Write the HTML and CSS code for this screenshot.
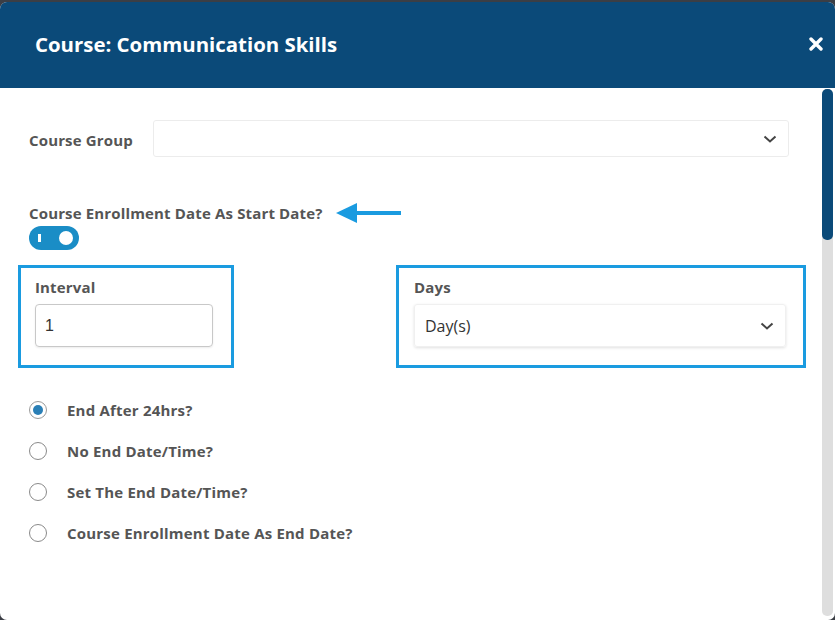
FILE: index.html
```html
<!DOCTYPE html>
<html lang="en">
<head>
    <meta charset="UTF-8">
    <meta name="viewport" content="width=device-width, initial-scale=1.0">
    <title>Course: Communication Skills</title>
    <link rel="stylesheet" href="styles.css">
</head>
<body>
    <div class="modal">
        <div class="modal-header">
            <h2 class="modal-title">Course: Communication Skills</h2>
            <span class="close-btn">
                <svg width="14" height="14" viewBox="0 0 14 14"><path d="M2 2 L12 12 M12 2 L2 12" stroke="#fff" stroke-width="3.4" stroke-linecap="round"/></svg>
            </span>
        </div>

        <div class="modal-body">
            <div class="content">
                <div class="group-row">
                    <label class="field-label group-label">Course Group</label>
                    <div class="select-box plain">
                        <span></span>
                        <svg class="chevron" width="14" height="8" viewBox="0 0 14 8"><polyline points="1.5,1.5 7,6.5 12.5,1.5" fill="none" stroke="#444" stroke-width="2"/></svg>
                    </div>
                </div>

                <div class="start-row">
                    <label class="field-label">Course Enrollment Date As Start Date?</label>
                    <svg class="pointer" width="66" height="22" viewBox="0 0 66 22"><polygon points="0,11 21,1 21,21" fill="#1a9be0"/><rect x="20" y="9" width="45" height="4" fill="#1a9be0"/></svg>
                </div>
                <div class="toggle">
                    <span class="toggle-bar"></span>
                    <span class="toggle-knob"></span>
                </div>

                <div class="highlight-row">
                    <div class="highlight interval-box">
                        <label class="field-label">Interval</label>
                        <div class="text-input">1</div>
                    </div>
                    <div class="highlight days-box">
                        <label class="field-label">Days</label>
                        <div class="select-box shadowed">
                            <span class="select-value">Day(s)</span>
                            <svg class="chevron" width="14" height="8" viewBox="0 0 14 8"><polyline points="1.5,1.5 7,6.5 12.5,1.5" fill="none" stroke="#444" stroke-width="2"/></svg>
                        </div>
                    </div>
                </div>

                <div class="radio-list">
                    <div class="radio-item"><span class="radio checked"></span>End After 24hrs?</div>
                    <div class="radio-item"><span class="radio"></span>No End Date/Time?</div>
                    <div class="radio-item"><span class="radio"></span>Set The End Date/Time?</div>
                    <div class="radio-item"><span class="radio"></span>Course Enrollment Date As End Date?</div>
                </div>
            </div>

            <div class="scrollbar">
                <div class="scroll-thumb"></div>
            </div>
        </div>
    </div>
</body>
</html>
```

FILE: styles.css
```css
html, body {
    margin: 0;
    height: 100%;
}
body {
    background: #3b3e45;
    font-family: "Open Sans", "Noto Sans", sans-serif;
    padding-top: 2px;
    box-sizing: border-box;
    overflow: hidden;
}
.modal {
    height: 618px;
    background: #fff;
    border-radius: 7px;
    overflow: hidden;
    display: flex;
    flex-direction: column;
}
.modal-header {
    height: 86px;
    background: #0b4a79;
    display: flex;
    align-items: center;
    justify-content: space-between;
    padding: 0 12px 0 35px;
    flex-shrink: 0;
}
.modal-title {
    margin: 0 0 2px;
    color: #fff;
    font-size: 20.4px;
    font-weight: 700;
}
.close-btn {
    display: flex;
    margin-top: -2px;
}
.modal-body {
    flex: 1;
    display: flex;
    min-height: 0;
}
.content {
    flex: 1;
    min-width: 0;
    padding: 32px 33px 0 29px;
}
.field-label {
    display: block;
    color: #555;
    font-size: 15px;
    font-weight: 700;
    letter-spacing: 0.15px;
}
.group-row {
    display: flex;
    align-items: center;
}
.group-label {
    width: 124px;
    flex-shrink: 0;
    padding-top: 2px;
}
.select-box {
    flex: 1;
    height: 37px;
    border: 1px solid #ececec;
    border-radius: 3px;
    box-sizing: border-box;
    display: flex;
    align-items: center;
    justify-content: space-between;
    padding: 0 10px 0 10px;
}
.select-box.shadowed {
    height: 43px;
    width: 372px;
    flex: none;
    border-color: #f0f0f0;
    box-shadow: 0 1px 3px rgba(0, 0, 0, 0.12);
    margin-top: 7px;
}
.select-value {
    color: #333;
    font-size: 16px;
}
.chevron {
    margin-right: 1px;
}
.start-row {
    display: flex;
    align-items: center;
    margin-top: 45px;
    height: 22px;
}
.pointer {
    margin-left: 13px;
}
.toggle {
    position: relative;
    width: 50px;
    height: 24px;
    border-radius: 12px;
    background: #1a8dc6;
    margin-top: 2px;
}
.toggle-bar {
    position: absolute;
    left: 9px;
    top: 8px;
    width: 3px;
    height: 8px;
    background: #fff;
}
.toggle-knob {
    position: absolute;
    right: 6px;
    top: 5px;
    width: 14px;
    height: 14px;
    border-radius: 50%;
    background: #fff;
}
.highlight-row {
    display: flex;
    gap: 162px;
    margin: 15px 0 0 -11px;
}
.highlight {
    height: 103px;
    border: 3px solid #1a9be0;
    box-sizing: border-box;
    padding: 9px 0 0 14px;
    flex-shrink: 0;
}
.interval-box {
    width: 216px;
}
.days-box {
    width: 410px;
    padding-left: 15px;
}
.text-input {
    width: 178px;
    height: 43px;
    margin-top: 7px;
    border: 1px solid #c8c8c8;
    border-radius: 4px;
    box-sizing: border-box;
    padding: 0 9px;
    display: flex;
    align-items: center;
    font-family: "Liberation Sans", Arial, sans-serif;
    font-size: 16px;
    color: #333;
    box-shadow: 0 1px 2px rgba(0, 0, 0, 0.08);
}
.days-box .select-box.shadowed {
    margin-top: 7px;
}
.radio-list {
    margin-top: 32px;
    display: flex;
    flex-direction: column;
    gap: 21px;
}
.radio-item {
    display: flex;
    align-items: center;
    height: 20px;
    color: #555;
    font-size: 15px;
    font-weight: 700;
    letter-spacing: 0.2px;
}
.radio {
    width: 18px;
    height: 18px;
    border: 1px solid #8a8a8a;
    border-radius: 50%;
    box-sizing: border-box;
    margin-right: 20px;
    position: relative;
    flex-shrink: 0;
}
.radio.checked {
    border-color: #9a9a9a;
}
.radio.checked::after {
    content: "";
    position: absolute;
    left: 3px;
    top: 3px;
    width: 10px;
    height: 10px;
    border-radius: 50%;
    background: #2a7fb6;
}
.scrollbar {
    width: 11px;
    margin: 1px 2px 4px 0;
    background: #dedede;
    border-radius: 5px;
    flex-shrink: 0;
}
.scroll-thumb {
    height: 151px;
    background: #0b4a79;
    border-radius: 5px;
}
```
